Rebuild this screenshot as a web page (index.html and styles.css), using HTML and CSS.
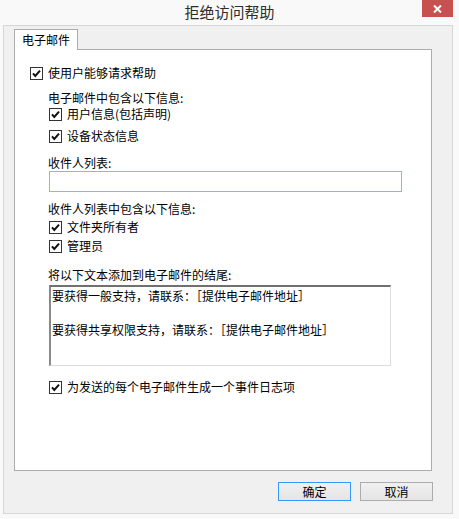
FILE: index.html
```html
<!DOCTYPE html>
<html lang="zh-CN">
<head>
    <meta charset="UTF-8">
    <title>拒绝访问帮助</title>
    <link rel="stylesheet" href="styles.css">
</head>
<body>
    <div class="titlebar">
        <span></span>
        <h1 class="title">拒绝访问帮助</h1>
        <button class="close" aria-label="关闭">
            <svg width="9" height="8" viewBox="0 0 9 8">
                <path d="M1 0.5 L8 7.5 M8 0.5 L1 7.5" stroke="#fff" stroke-width="2" fill="none"/>
            </svg>
        </button>
    </div>

    <div class="client">
        <div class="tab">电子邮件</div>
        <div class="panel">
            <label class="row check enable">
                <svg class="box" width="13" height="13" viewBox="0 0 13 13"><rect x="0.5" y="0.5" width="12" height="12" fill="#fff" stroke="#333"/><path d="M3 6.3 L5.3 9 L10 3.6" stroke="#111" stroke-width="2" fill="none"/></svg>
                使用户能够请求帮助
            </label>

            <div class="row caption cap-info">电子邮件中包含以下信息:</div>
            <label class="row check sub">
                <svg class="box" width="13" height="13" viewBox="0 0 13 13"><rect x="0.5" y="0.5" width="12" height="12" fill="#fff" stroke="#333"/><path d="M3 6.3 L5.3 9 L10 3.6" stroke="#111" stroke-width="2" fill="none"/></svg>
                用户信息(包括声明)
            </label>
            <label class="row check sub device">
                <svg class="box" width="13" height="13" viewBox="0 0 13 13"><rect x="0.5" y="0.5" width="12" height="12" fill="#fff" stroke="#333"/><path d="M3 6.3 L5.3 9 L10 3.6" stroke="#111" stroke-width="2" fill="none"/></svg>
                设备状态信息
            </label>

            <div class="row caption cap-list">收件人列表:</div>
            <input class="recipients" type="text">

            <div class="row caption cap-listinfo">收件人列表中包含以下信息:</div>
            <label class="row check sub owner">
                <svg class="box" width="13" height="13" viewBox="0 0 13 13"><rect x="0.5" y="0.5" width="12" height="12" fill="#fff" stroke="#333"/><path d="M3 6.3 L5.3 9 L10 3.6" stroke="#111" stroke-width="2" fill="none"/></svg>
                文件夹所有者
            </label>
            <label class="row check sub admin">
                <svg class="box" width="13" height="13" viewBox="0 0 13 13"><rect x="0.5" y="0.5" width="12" height="12" fill="#fff" stroke="#333"/><path d="M3 6.3 L5.3 9 L10 3.6" stroke="#111" stroke-width="2" fill="none"/></svg>
                管理员
            </label>

            <div class="row caption cap-footer">将以下文本添加到电子邮件的结尾:</div>
            <textarea class="footer-text" readonly>要获得一般支持，请联系：［提供电子邮件地址］

要获得共享权限支持，请联系：［提供电子邮件地址］</textarea>

            <label class="row check sub log">
                <svg class="box" width="13" height="13" viewBox="0 0 13 13"><rect x="0.5" y="0.5" width="12" height="12" fill="#fff" stroke="#333"/><path d="M3 6.3 L5.3 9 L10 3.6" stroke="#111" stroke-width="2" fill="none"/></svg>
                为发送的每个电子邮件生成一个事件日志项
            </label>
        </div>

        <div class="buttons">
            <button class="btn default">确定</button>
            <button class="btn">取消</button>
        </div>
    </div>
</body>
</html>
```

FILE: styles.css
```css
:root {
    --frame-color: #f9f9f9;
    --client-color: #f0f0f0;
    --panel-border: #acacac;
    --text-color: #000;
    --ui-font: "Noto Sans CJK SC", "Microsoft YaHei", sans-serif;
}

body {
    margin: 0;
    padding: 0;
    background-color: var(--frame-color);
    font-family: var(--ui-font);
    font-size: 12px;
    color: var(--text-color);
}

/* title bar */
.titlebar {
    display: grid;
    grid-template-columns: 1fr auto 1fr;
    height: 25px;
}

.title {
    margin: 0;
    font-size: 15px;
    font-weight: normal;
    line-height: 24px;
    color: #2d2d2d;
}

.close {
    justify-self: end;
    align-self: start;
    width: 31px;
    height: 17px;
    margin-right: 6px;
    padding: 0;
    border: none;
    background-color: #c75050;
    display: flex;
    align-items: center;
    justify-content: center;
}

/* client area */
.client {
    box-sizing: border-box;
    width: 450px;
    height: 489px;
    margin-left: 3px;
    padding: 3px 0 0 10px;
    border: 1px solid #d6d6d6;
    background-color: var(--client-color);
}

.tab {
    position: relative;
    z-index: 1;
    box-sizing: border-box;
    width: 64px;
    height: 21px;
    margin-bottom: -1px;
    padding-left: 7px;
    border: 1px solid var(--panel-border);
    border-bottom: none;
    background-color: #fff;
    line-height: 20px;
}

.panel {
    box-sizing: border-box;
    width: 418px;
    height: 422px;
    border: 1px solid var(--panel-border);
    background-color: #fff;
    overflow: hidden;
}

.row {
    height: 16px;
    line-height: 16px;
    white-space: nowrap;
}

.check {
    display: flex;
    align-items: center;
    gap: 5px;
}

.box {
    flex: none;
}

.enable {
    margin: 15px 0 0 15px;
}

.caption {
    margin-left: 33px;
}

.sub {
    margin-left: 34px;
}

.cap-info { margin-top: 9px; }
.device { margin-top: 6px; }
.cap-list { margin-top: 11px; }
.cap-listinfo { margin-top: 9px; }
.owner { margin-top: 2px; }
.admin { margin-top: 3px; }
.cap-footer { margin-top: 13px; }
.log { margin-top: 13px; }

.recipients {
    display: block;
    box-sizing: border-box;
    width: 353px;
    height: 21px;
    margin: 0 0 0 34px;
    padding: 0 2px;
    border: 1px solid #8cb6e3;
    font-family: var(--ui-font);
    font-size: 12px;
    outline: none;
}

.footer-text {
    display: block;
    box-sizing: border-box;
    width: 342px;
    height: 81px;
    margin: 2px 0 0 34px;
    padding: 0 1px;
    border-style: solid;
    border-width: 2px 1px 1px 2px;
    border-color: #707070 #dcdcdc #dcdcdc #8a8a8a;
    font-family: var(--ui-font);
    font-size: 12px;
    line-height: 17px;
    color: #000;
    resize: none;
    overflow: hidden;
    outline: none;
}

/* dialog buttons */
.buttons {
    display: flex;
    justify-content: flex-end;
    gap: 9px;
    width: 419px;
    margin-top: 11px;
}

.btn {
    box-sizing: border-box;
    width: 73px;
    height: 19px;
    padding: 0;
    border: 1px solid #acacac;
    background: linear-gradient(#f0f0f0, #e5e5e5);
    font-family: var(--ui-font);
    font-size: 12px;
    line-height: 16px;
    color: #000;
}

.btn.default {
    border-color: #3399ff;
}
```
